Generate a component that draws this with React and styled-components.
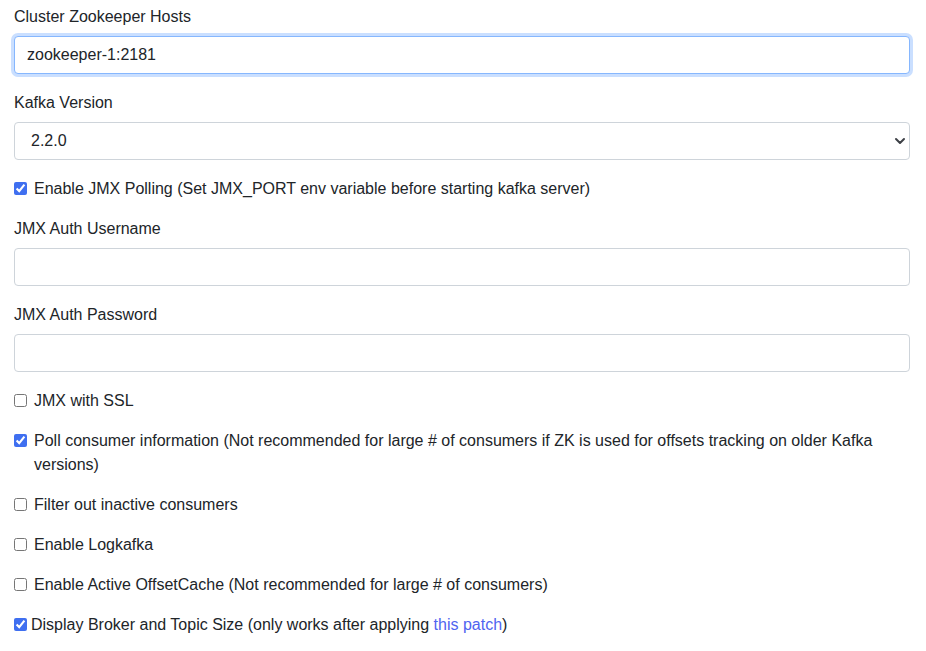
import React, { useState } from "react";
import styled, { createGlobalStyle } from "styled-components";

const GlobalStyle = createGlobalStyle`
  body {
    margin: 0;
    background: #fff;
    font-family: "Liberation Sans", Arial, Helvetica, sans-serif;
    font-size: 16px;
    line-height: 24px;
    color: #212529;
  }
`;

const Form = styled.form`
  padding: 4px 16px 0 14px;
`;

const Group = styled.div`
  margin-bottom: 16px;
`;

const Label = styled.label`
  display: block;
  padding-top: 1px;
  margin-bottom: 7px;
`;

const TextInput = styled.input`
  display: block;
  box-sizing: border-box;
  width: 100%;
  height: 38px;
  padding: 6px 12px;
  font: inherit;
  color: #212529;
  background: #fff;
  border: 1px solid #ced4da;
  border-radius: 4px;
  outline: none;
  box-shadow: ${(p) => (p.$focused ? "0 0 0 3px rgba(13, 110, 253, 0.22)" : "none")};
  border-color: ${(p) => (p.$focused ? "#86b7fe" : "#ced4da")};
`;

const SelectWrap = styled.div`
  position: relative;
`;

const Select = styled.select`
  display: block;
  box-sizing: border-box;
  width: 100%;
  height: 38px;
  padding: 6px 36px 6px 16px;
  font: inherit;
  color: #212529;
  background: #fff;
  border: 1px solid #ced4da;
  border-radius: 4px;
  appearance: none;
  outline: none;
`;

const Chevron = styled.svg`
  position: absolute;
  right: 4px;
  top: 14px;
  pointer-events: none;
`;

const Check = styled.label`
  display: flex;
  align-items: flex-start;
  padding-right: 10px;
`;

const Text = styled.span`
  padding-top: 1px;
  margin-bottom: -1px;
`;

const Box = styled.input`
  flex: none;
  width: 13px;
  height: 13px;
  margin: 6px ${(p) => (p.$tight ? "4px" : "7px")} 0 0;
  accent-color: #3f6ff0;
`;

const Link = styled.a`
  color: #5064f0;
  text-decoration: none;
`;

const CheckRow = ({ checked, tight, children }) => {
  const [on, setOn] = useState(checked);
  return (
    <Group>
      <Check>
        <Box type="checkbox" checked={on} $tight={tight} onChange={() => setOn(!on)} />
        <Text>{children}</Text>
      </Check>
    </Group>
  );
};

export default function App() {
  return (
    <>
      <GlobalStyle />
      <Form onSubmit={(e) => e.preventDefault()}>
        <Group>
          <Label>Cluster Zookeeper Hosts</Label>
          <TextInput defaultValue="zookeeper-1:2181" $focused />
        </Group>
        <Group>
          <Label>Kafka Version</Label>
          <SelectWrap>
            <Select defaultValue="2.2.0">
              <option>2.2.0</option>
              <option>2.1.0</option>
              <option>2.0.0</option>
            </Select>
            <Chevron width="12" height="10" viewBox="0 0 12 10">
              <path d="M2 3l4 4 4-4" fill="none" stroke="#3d4046" strokeWidth="2" strokeLinecap="round" strokeLinejoin="round" />
            </Chevron>
          </SelectWrap>
        </Group>
        <CheckRow checked>
          Enable JMX Polling (Set JMX_PORT env variable before starting kafka server)
        </CheckRow>
        <Group>
          <Label>JMX Auth Username</Label>
          <TextInput />
        </Group>
        <Group>
          <Label>JMX Auth Password</Label>
          <TextInput type="password" />
        </Group>
        <CheckRow>JMX with SSL</CheckRow>
        <CheckRow checked>
          Poll consumer information (Not recommended for large # of consumers if ZK is used for offsets tracking on older Kafka versions)
        </CheckRow>
        <CheckRow>Filter out inactive consumers</CheckRow>
        <CheckRow>Enable Logkafka</CheckRow>
        <CheckRow>Enable Active OffsetCache (Not recommended for large # of consumers)</CheckRow>
        <CheckRow checked tight>
          Display Broker and Topic Size (only works after applying <Link href="#">this patch</Link>)
        </CheckRow>
      </Form>
    </>
  );
}
